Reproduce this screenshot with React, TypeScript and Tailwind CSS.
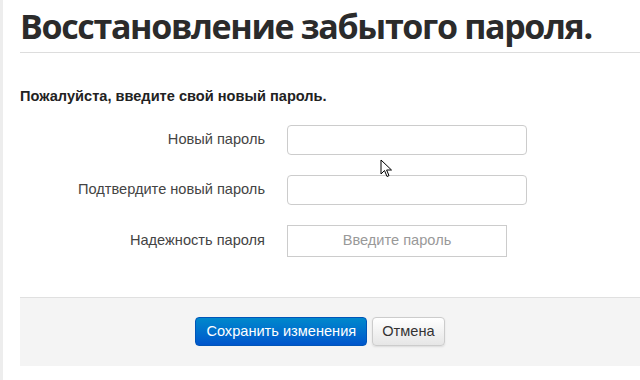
import React from 'react'

const fields = [
  { label: 'Новый пароль', kind: 'input' },
  { label: 'Подтвердите новый пароль', kind: 'input' },
  { label: 'Надежность пароля', kind: 'meter' },
]

export default function App() {
  return (
    <div className="relative flex h-[380px] w-[640px] overflow-hidden bg-white font-['Liberation_Sans',Arial,sans-serif] text-[14.6px] text-[#333]">
      <div className="w-[3px] shrink-0 bg-[#ededed]" />
      <div className="ml-[17px] flex-1">
        {/* Heading */}
        <h1 className="border-b border-[#dddddd] pb-[7px] pt-[7px] font-['Open_Sans',sans-serif] text-[34px] leading-[38px] font-bold tracking-[-1.35px] text-[#2b2b2b]">
          Восстановление забытого пароля.
        </h1>

        <p className="mt-[33px] font-bold text-[#222]">Пожалуйста, введите свой новый пароль.</p>

        {/* Form rows */}
        <div className="mt-[17px] flex flex-col gap-[20px]">
          {fields.map((f) => (
            <div key={f.label} className="flex items-center">
              <label className="w-[245px] text-right text-[#444]">{f.label}</label>
              <div className="ml-[22px]">
                {f.kind === 'input' ? (
                  <input
                    type="password"
                    className="h-[30px] w-[240px] rounded-[4px] border border-[#cccccc] bg-white px-2 outline-none"
                  />
                ) : (
                  <div className="flex h-[32px] w-[220px] items-center justify-center border border-[#cccccc] text-[#999]">
                    Введите пароль
                  </div>
                )}
              </div>
            </div>
          ))}
        </div>

        {/* Footer */}
        <div className="mt-[40px] flex h-[69px] items-center justify-center gap-[5px] border-t border-[#e0e0e0] bg-[#f4f4f4] pr-[20px]">
          <button className="h-[29px] rounded-[4px] border border-[#0055b8] bg-gradient-to-b from-[#0088cc] to-[#0055cc] px-[10px] text-[#fff]">
            Сохранить изменения
          </button>
          <button className="h-[29px] rounded-[4px] border border-[#cccccc] bg-gradient-to-b from-[#ffffff] to-[#e6e6e6] px-[9px] text-[#333] shadow-[0_1px_2px_rgba(0,0,0,0.1)]">
            Отмена
          </button>
        </div>
      </div>

      {/* mouse pointer */}
      <svg className="absolute left-[380px] top-[159px]" width="14" height="20" viewBox="0 0 14 20">
        <path d="M1 1 L1 15 L4.5 11.5 L7 17.5 L9 16.6 L6.6 11 L11.5 11 Z" fill="#fff" stroke="#000" strokeWidth="1" strokeLinejoin="round" />
      </svg>
    </div>
  )
}
